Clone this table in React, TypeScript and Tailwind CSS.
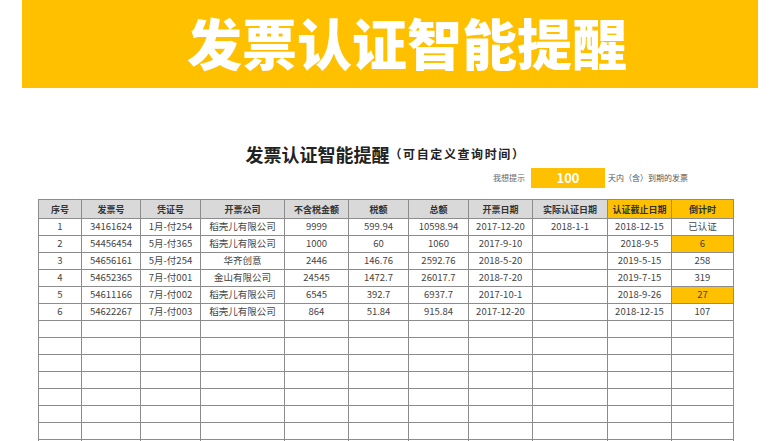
import React from 'react';

const font = { fontFamily: '"Noto Sans CJK SC", "Noto Sans", sans-serif' };

const columns = [
  { title: '序号', width: 43 },
  { title: '发票号', width: 59 },
  { title: '凭证号', width: 60 },
  { title: '开票公司', width: 84 },
  { title: '不含税金额', width: 64 },
  { title: '税额', width: 60 },
  { title: '总额', width: 60 },
  { title: '开票日期', width: 64 },
  { title: '实际认证日期', width: 75 },
  { title: '认证截止日期', width: 64, hot: true },
  { title: '倒计时', width: 62, hot: true },
];

const rows = [
  ['1', '34161624', '1月-付254', '稻壳儿有限公司', '9999', '599.94', '10598.94', '2017-12-20', '2018-1-1', '2018-12-15', '已认证'],
  ['2', '54456454', '5月-付365', '稻壳儿有限公司', '1000', '60', '1060', '2017-9-10', '', '2018-9-5', '6'],
  ['3', '54656161', '5月-付254', '华齐创意', '2446', '146.76', '2592.76', '2018-5-20', '', '2019-5-15', '258'],
  ['4', '54652365', '7月-付001', '金山有限公司', '24545', '1472.7', '26017.7', '2018-7-20', '', '2019-7-15', '319'],
  ['5', '54611166', '7月-付002', '稻壳儿有限公司', '6545', '392.7', '6937.7', '2017-10-1', '', '2018-9-26', '27'],
  ['6', '54622267', '7月-付003', '稻壳儿有限公司', '864', '51.84', '915.84', '2017-12-20', '', '2018-12-15', '107'],
];

const emptyRows = 8;

const App: React.FC = () => {
  return (
    <div className="w-[780px] h-[441px] overflow-hidden bg-white" style={font}>
      <div className="mx-[22px] h-[88px] bg-[#FFC000] flex items-center justify-center pl-[34px]">
        <span className="text-white text-[55px] font-black leading-none -mt-[6px]">
          发票认证智能提醒
        </span>
      </div>

      <div className="ml-[38px] w-[695px]">
        <div className="mt-[54px] h-[24px] flex items-center justify-center text-[#222]">
          <span className="text-[18px] font-bold leading-none">发票认证智能提醒</span>
          <span className="text-[12px] font-bold leading-none tracking-[1.6px]">（可自定义查询时间）</span>
        </div>

        <div className="mt-[2px] h-[20px] flex items-center">
          <div className="w-[493px] flex justify-end pr-[6px] text-[8px] text-[#666]">我想提示</div>
          <div className="w-[74px] h-[20px] bg-[#FFC000] flex items-center justify-center text-white text-[13px] font-bold">
            100
          </div>
          <div className="ml-[3px] text-[8px] text-[#555]">天内（含）到期的发票</div>
        </div>

        <table className="mt-[11px] border-collapse table-fixed w-[695px] text-[9.5px] text-[#444]">
          <colgroup>
            {columns.map((c) => (
              <col key={c.title} style={{ width: c.width }} />
            ))}
          </colgroup>
          <thead>
            <tr className="h-[19px]">
              {columns.map((c) => (
                <th
                  key={c.title}
                  className={`border border-[#8c8c8c] p-0 font-bold text-[9px] text-[#333] leading-none ${
                    c.hot ? 'bg-[#FFC000]' : 'bg-[#D9D9D9]'
                  }`}
                >
                  {c.title}
                </th>
              ))}
            </tr>
          </thead>
          <tbody>
            {rows.map((row) => (
              <tr key={row[0]} className="h-[17px]">
                {row.map((cell, i) => {
                  const hot = i === 10 && (cell === '6' || cell === '27');
                  return (
                    <td
                      key={i}
                      className={`border border-[#8c8c8c] p-0 text-center leading-none whitespace-nowrap ${
                        hot ? 'bg-[#FFC000]' : ''
                      }`}
                    >
                      {cell}
                    </td>
                  );
                })}
              </tr>
            ))}
            {Array.from({ length: emptyRows }).map((_, r) => (
              <tr key={`e${r}`} className="h-[17px]">
                {columns.map((c) => (
                  <td key={c.title} className="border border-[#8c8c8c] p-0" />
                ))}
              </tr>
            ))}
          </tbody>
        </table>
      </div>
    </div>
  );
};

export default App;
